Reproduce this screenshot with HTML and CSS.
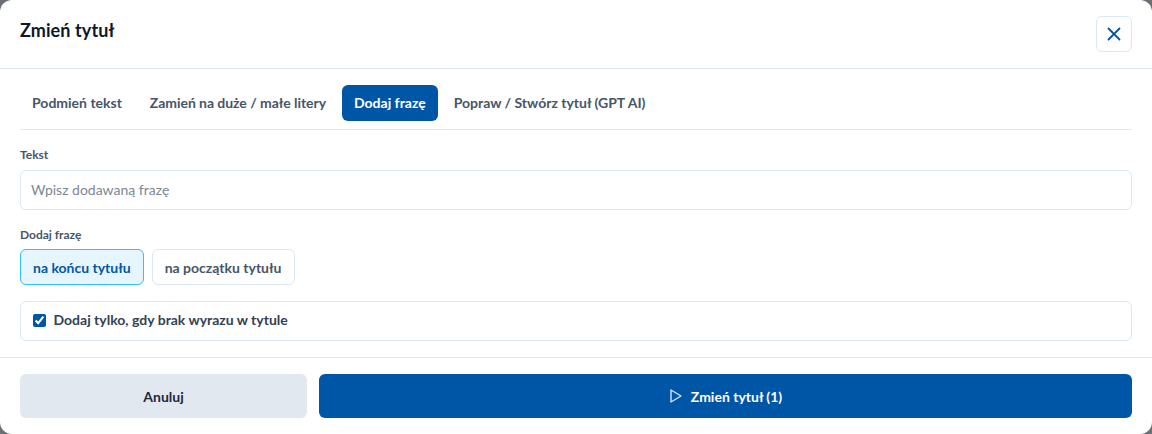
FILE: index.html
```html
<!DOCTYPE html>
<html lang="pl">
<head>
<meta charset="utf-8">
<title>Zmień tytuł</title>
<link rel="stylesheet" href="styles.css">
</head>
<body>
<div class="modal">
  <header class="modal-head">
    <h2 class="modal-title">Zmień tytuł</h2>
    <button class="close-btn" type="button" aria-label="Zamknij">
      <svg width="16" height="16" viewBox="0 0 16 16" fill="none" stroke="#0056a6" stroke-width="1.800" stroke-linecap="round"><path d="M2.500 2.500l11 11M13.500 2.500l-11 11"/></svg>
    </button>
  </header>
  <div class="modal-body">
    <nav class="tabs">
      <a class="tab">Podmień tekst</a>
      <a class="tab tab-tight">Zamień na duże / małe litery</a>
      <a class="tab tab-active">Dodaj frazę</a>
      <a class="tab">Popraw / Stwórz tytuł (GPT AI)</a>
    </nav>
    <label class="field-label label-first">Tekst</label>
    <input class="text-input" type="text" placeholder="Wpisz dodawaną frazę">
    <label class="field-label label-second">Dodaj frazę</label>
    <div class="options">
      <button class="option option-active" type="button">na końcu tytułu</button>
      <button class="option" type="button">na początku tytułu</button>
    </div>
    <label class="check-row">
      <input class="check" type="checkbox" checked>
      <span class="check-text">Dodaj tylko, gdy brak wyrazu w tytule</span>
    </label>
  </div>
  <footer class="modal-foot">
    <button class="btn btn-cancel" type="button">Anuluj</button>
    <button class="btn btn-primary" type="button">
      <svg width="14" height="14" viewBox="0 0 14 14" fill="none" stroke="#d5e2f0" stroke-width="1.400" stroke-linejoin="round"><path d="M2 1l10 6-10 6z"/></svg>
      <span>Zmień tytuł (1)</span>
    </button>
  </footer>
</div>
</body>
</html>
```
FILE: styles.css
```css
* { box-sizing: border-box; }
html, body { margin: 0; height: 100%; }
body {
  background: #6b6f76;
  font-family: "Lato", sans-serif;
  overflow: hidden;
}
.modal {
  width: 1152px;
  height: 434px;
  background: #fff;
  border-radius: 12px;
  display: flex;
  flex-direction: column;
}
.modal-head {
  height: 69px;
  flex: none;
  border-bottom: 1px solid #d9e8f3;
  padding: 16px 20px 0;
  display: flex;
  justify-content: space-between;
  align-items: flex-start;
}
.modal-title {
  margin: 0;
  font-size: 18px;
  line-height: 28px;
  font-weight: 700;
  letter-spacing: 0.1px;
  color: #0f172a;
}
.close-btn {
  width: 36px;
  height: 36px;
  padding: 0;
  background: #fff;
  border: 1px solid #d9e8f3;
  border-radius: 6px;
  display: flex;
  align-items: center;
  justify-content: center;
}
.modal-body {
  flex: 1;
  padding: 16px 20px 0;
  display: flex;
  flex-direction: column;
}
.tabs {
  display: flex;
  gap: 4px;
  padding-bottom: 8px;
  border-bottom: 1px solid #e2e8f0;
}
.tab {
  height: 36px;
  padding: 0 12px;
  border-radius: 6px;
  font-size: 14px;
  font-weight: 700;
  line-height: 36px;
  color: #475569;
}
.tab-tight { letter-spacing: -0.05px; }
.tab-active { background: #0056a6; color: #fff; }
.field-label {
  display: block;
  font-size: 12px;
  line-height: 16px;
  font-weight: 700;
  color: #475569;
}
.label-first { margin-top: 17px; }
.label-second { margin-top: 17px; }
.text-input {
  margin-top: 7px;
  height: 40px;
  width: 100%;
  padding: 0 10px 2px;
  border: 1px solid #d9e8f3;
  border-radius: 6px;
  font: 400 14px "Lato", sans-serif;
  color: #334155;
  outline: none;
}
.text-input::placeholder { color: #7c8797; opacity: 1; }
.options {
  display: flex;
  gap: 8px;
  margin-top: 6px;
}
.option {
  height: 36px;
  padding: 0 12px;
  background: #fff;
  border: 1px solid #d9e8f3;
  border-radius: 6px;
  font: 700 14px "Lato", sans-serif;
  color: #475569;
}
.option-active {
  background: #e6f6ff;
  border-color: #38bdf8;
  color: #0056a6;
}
.check-row {
  margin-top: 16px;
  height: 40px;
  border: 1px solid #d9e8f3;
  border-radius: 6px;
  padding: 0 12px;
  display: flex;
  align-items: center;
  gap: 7.500px;
  font-size: 14px;
  font-weight: 700;
  color: #334155;
}
.check-text { padding-bottom: 3px; }
.check {
  width: 13px;
  height: 13px;
  margin: 0 0 1px;
  accent-color: #0056a6;
}
.modal-foot {
  flex: none;
  height: 77px;
  border-top: 1px solid #e2e8f0;
  padding: 16px 20px;
  display: flex;
  gap: 12px;
}
.btn {
  height: 44px;
  border: none;
  border-radius: 6px;
  font: 700 14px "Lato", sans-serif;
  display: flex;
  align-items: center;
  justify-content: center;
  gap: 8px;
}
.btn-cancel { width: 287px; flex: none; background: #e2e8f0; color: #1e293b; }
.btn-primary { flex: 1; background: #0056a6; color: #fff; }
```
